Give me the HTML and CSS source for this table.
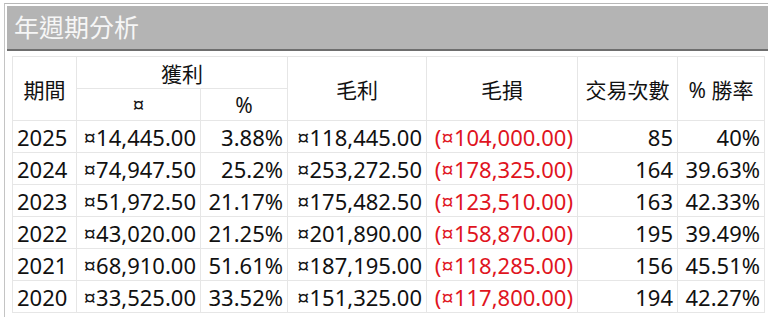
FILE: index.html
```html
<!DOCTYPE html>
<html lang="zh-Hant">
<head>
  <meta charset="UTF-8">
  <title>年週期分析</title>
  <link rel="stylesheet" href="styles.css">
</head>
<body>
  <div class="frame">
    <div class="title-bar">年週期分析</div>

    <table class="stats">
      <colgroup>
        <col class="c-period">
        <col class="c-amount">
        <col class="c-pct">
        <col class="c-gross">
        <col class="c-loss">
        <col class="c-trades">
        <col class="c-win">
      </colgroup>
      <thead>
        <tr>
          <th rowspan="2">期間</th>
          <th colspan="2">獲利</th>
          <th rowspan="2">毛利</th>
          <th rowspan="2">毛損</th>
          <th rowspan="2">交易次數</th>
          <th rowspan="2">% 勝率</th>
        </tr>
        <tr>
          <th class="sub">¤</th>
          <th class="sub">%</th>
        </tr>
      </thead>
      <tbody>
        <tr><td class="year">2025</td><td>¤14,445.00</td><td>3.88%</td><td>¤118,445.00</td><td class="neg">(¤104,000.00)</td><td>85</td><td>40%</td></tr>
        <tr><td class="year">2024</td><td>¤74,947.50</td><td>25.2%</td><td>¤253,272.50</td><td class="neg">(¤178,325.00)</td><td>164</td><td>39.63%</td></tr>
        <tr><td class="year">2023</td><td>¤51,972.50</td><td>21.17%</td><td>¤175,482.50</td><td class="neg">(¤123,510.00)</td><td>163</td><td>42.33%</td></tr>
        <tr><td class="year">2022</td><td>¤43,020.00</td><td>21.25%</td><td>¤201,890.00</td><td class="neg">(¤158,870.00)</td><td>195</td><td>39.49%</td></tr>
        <tr><td class="year">2021</td><td>¤68,910.00</td><td>51.61%</td><td>¤187,195.00</td><td class="neg">(¤118,285.00)</td><td>156</td><td>45.51%</td></tr>
        <tr><td class="year">2020</td><td>¤33,525.00</td><td>33.52%</td><td>¤151,325.00</td><td class="neg">(¤117,800.00)</td><td>194</td><td>42.27%</td></tr>
      </tbody>
    </table>
  </div>
</body>
</html>
```

FILE: styles.css
```css
body {
  margin: 0;
  background-color: #fff;
  font-family: "Noto Sans", "Noto Sans CJK TC", sans-serif;
  color: #111;
  overflow: hidden;
}

.frame {
  margin: 3px 0 0 4px;
  padding: 2px 0 0 2px;
  border-top: 1px solid #b8b8b8;
  border-left: 1px solid #c4c4c4;
  height: 320px;
}

.title-bar {
  height: 43px;
  line-height: 43px;
  padding-left: 7px;
  background-color: #b4b4b4;
  border-bottom: 2px solid #6e6e6e;
  color: #f6f6f6;
  font-size: 25px;
}

.stats {
  margin: 5px 0 0 5px;
  border-collapse: collapse;
  table-layout: fixed;
  width: 752px;
}

.c-period { width: 64px; }
.c-amount { width: 124px; }
.c-pct { width: 87px; }
.c-gross { width: 139px; }
.c-loss { width: 151px; }
.c-trades { width: 100px; }
.c-win { width: 87px; }

.stats th,
.stats td {
  border: 1px solid #e6e6e6;
  height: 31px;
  padding: 0 4px;
  white-space: nowrap;
  overflow: hidden;
}

.stats th {
  font-weight: normal;
  font-size: 21px;
  text-align: center;
}

.stats th.sub {
  font-size: 21px;
}

.stats td {
  font-size: 22px;
  text-align: right;
}

.stats td.year {
  text-align: left;
}

.stats td.neg {
  color: #e0141e;
}
```
